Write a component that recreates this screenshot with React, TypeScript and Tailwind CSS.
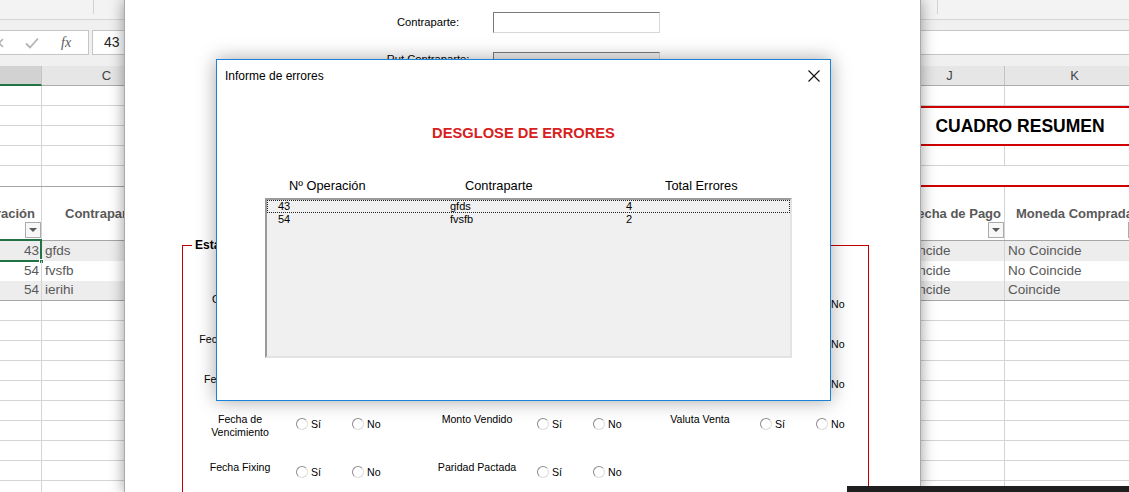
import React from "react";

function Filter() {
  return (
    <div className="flex h-[16px] w-[16px] items-center justify-center border border-[#ababab] bg-[#f7f7f7]">
      <div className="h-0 w-0 border-l-[4px] border-r-[4px] border-t-[4px] border-l-transparent border-r-transparent border-t-[#595959]" />
    </div>
  );
}

function EmptyRow({ h = "h-[20px]" }: { h?: string }) {
  return (
    <div className={`flex shrink-0 border-b border-[#d4d4d4] ${h}`}>
      <div className="w-[122px] border-r border-[#d4d4d4]" />
      <div className="w-[130px] border-r border-[#d4d4d4]" />
      <div className="w-[723px] border-r border-[#d4d4d4]" />
      <div className="w-[110px] border-r border-[#d4d4d4]" />
      <div className="w-[140px] border-r border-[#d4d4d4]" />
    </div>
  );
}

function DataRow({ op, cp, j, k, shaded, selected, last }: { op: string; cp: string; j: string; k: string; shaded?: boolean; selected?: boolean; last?: boolean }) {
  return (
    <div className={`flex h-[20px] shrink-0 text-[13.5px] text-[#595959] ${shaded ? "bg-[#ededed]" : "bg-white"} ${last ? "border-b border-[#a6a6a6]" : ""}`}>
      <div className="relative flex w-[122px] items-center justify-end border-r border-[#d4d4d4] pr-[2px]">
        {op}
        {selected && (
          <>
            <div className="absolute -bottom-[1px] -right-[1px] -top-[2px] left-0 border-2 border-[#217346]" />
            <div className="absolute -bottom-[3px] -right-[3px] h-[5px] w-[5px] border border-white bg-[#217346]" />
          </>
        )}
      </div>
      <div className="flex w-[130px] items-center border-r border-[#d4d4d4] pl-[3px]">{cp}</div>
      <div className="w-[723px] border-r border-[#d4d4d4]" />
      <div className="flex w-[110px] items-center border-r border-[#d4d4d4] pl-[3px]">{j}</div>
      <div className="flex w-[140px] items-center border-r border-[#d4d4d4] pl-[3px]">{k}</div>
    </div>
  );
}

function Excel() {
  return (
    <div className="flex h-full flex-col bg-white">
      {/* ribbon bottom */}
      <div className="flex h-[19px] shrink-0 bg-[#f3f3f3]">
        <div className="w-[93px]" />
        <div className="h-[14px] w-px bg-[#d2d2d2]" />
        <div className="w-[843px]" />
        <div className="h-[14px] w-px bg-[#d2d2d2]" />
      </div>
      <div className="h-[11px] shrink-0 border-t border-[#d5d5d5] bg-[#f0f0f0]" />
      {/* formula bar */}
      <div className="flex h-[25px] shrink-0 bg-[#f0f0f0]">
        <div className="relative flex w-[89px] items-center border border-l-0 border-[#c6c6c6] bg-white">
          <svg width="10" height="10" viewBox="0 0 10 10" className="-ml-[6px]">
            <path d="M1 1L9 9M9 1L1 9" stroke="#b4b4b4" strokeWidth="1.6" />
          </svg>
          <svg width="14" height="12" viewBox="0 0 14 12" className="ml-[21px]">
            <path d="M1 6.5L5 10.5L13 1.5" stroke="#b4b4b4" strokeWidth="1.8" fill="none" />
          </svg>
          <span className="ml-[22px] font-['Liberation_Serif'] text-[14px] italic text-[#595959]">fx</span>
        </div>
        <div className="ml-[3px] flex flex-1 items-center border border-r-0 border-[#c6c6c6] bg-white pl-[11px] text-[14px] text-[#222]">
          43
        </div>
      </div>
      <div className="h-[11px] shrink-0 bg-[#f0f0f0]" />

      <div className="-ml-[80px] flex w-[1225px] flex-col">
        {/* column headers */}
        <div className="flex h-[20px] shrink-0 text-[13px] text-[#444]">
          <div className="w-[122px] border-b-2 border-r border-[#217346] border-r-[#c3c3c3] bg-[#d2d2d2]" />
          <div className="flex w-[130px] items-center justify-center border-b border-r border-[#ababab] border-r-[#c3c3c3] bg-[#e6e6e6]">C</div>
          <div className="w-[723px] border-b border-r border-[#ababab] bg-[#e6e6e6]" />
          <div className="flex w-[110px] items-center justify-center border-b border-r border-[#ababab] border-r-[#c3c3c3] bg-[#e6e6e6]">J</div>
          <div className="flex w-[140px] items-center justify-center border-b border-r border-[#ababab] border-r-[#c3c3c3] bg-[#e6e6e6]">K</div>
        </div>

        <EmptyRow />
        <div className="flex h-[40px] shrink-0">
          <div className="flex w-[975px] flex-col">
            <div className="flex h-[20px] border-b border-[#d4d4d4]">
              <div className="w-[122px] border-r border-[#d4d4d4]" />
              <div className="w-[130px] border-r border-[#d4d4d4]" />
            </div>
            <div className="flex h-[20px] border-b border-[#d4d4d4]">
              <div className="w-[122px] border-r border-[#d4d4d4]" />
              <div className="w-[130px] border-r border-[#d4d4d4]" />
            </div>
          </div>
          <div className="flex w-[250px] items-center justify-center border-b-2 border-t-2 border-[#d00000] text-[17.5px] font-bold text-black">
            CUADRO RESUMEN
          </div>
        </div>
        <EmptyRow />
        <div className="flex h-[21px] shrink-0">
          <div className="flex w-[975px] border-b border-[#a6a6a6]">
            <div className="w-[122px] border-r border-[#d4d4d4]" />
            <div className="w-[130px] border-r border-[#d4d4d4]" />
          </div>
          <div className="w-[250px] border-b-2 border-[#d00000]" />
        </div>

        {/* table header */}
        <div className="flex h-[54px] shrink-0 border-b border-[#a6a6a6] text-[13px] font-bold text-[#595959]">
          <div className="flex w-[122px] flex-col items-end justify-end overflow-hidden border-r border-[#d4d4d4] pb-[2px]">
            <div className="whitespace-nowrap pr-[6px] leading-[16px]">Nº Operación</div>
            <Filter />
          </div>
          <div className="flex w-[130px] flex-col items-start justify-end border-r border-[#d4d4d4] pb-[2px] pl-[23px]">
            <div className="whitespace-nowrap leading-[16px]">Contraparte</div>
            <div className="h-[16px] self-end"><Filter /></div>
          </div>
          <div className="w-[723px] border-r border-[#d4d4d4]" />
          <div className="flex w-[110px] flex-col items-end justify-end border-r border-[#d4d4d4] pb-[2px]">
            <div className="whitespace-nowrap pr-[3px] leading-[16px]">Fecha de Pago</div>
            <Filter />
          </div>
          <div className="flex w-[140px] flex-col items-center justify-end border-r border-[#d4d4d4] pb-[2px]">
            <div className="whitespace-nowrap leading-[16px]">Moneda Comprada</div>
            <div className="self-end"><Filter /></div>
          </div>
        </div>

        <DataRow op="43" cp="gfds" j="Coincide" k="No Coincide" shaded selected />
        <DataRow op="54" cp="fvsfb" j="Coincide" k="No Coincide" />
        <DataRow op="54" cp="ierihi" j="Coincide" k="Coincide" shaded last />
        {Array.from({ length: 10 }).map((_, i) => (
          <EmptyRow key={i} />
        ))}
      </div>
    </div>
  );
}

function Radio({ label, w }: { label: string; w: string }) {
  return (
    <div className={`flex items-center gap-[3px] ${w}`}>
      <span className="h-[12px] w-[12px] shrink-0 rounded-full border border-b-[#dcdcdc] border-l-[#8c8c8c] border-r-[#dcdcdc] border-t-[#8c8c8c] bg-white" />
      <span className="leading-[13px]">{label}</span>
    </div>
  );
}

function FormRow({ h, a, b, c }: { h: string; a: string; b: string; c?: string }) {
  return (
    <div className={`flex items-start ${h}`}>
      <div className="ml-[7px] w-[100px] text-center leading-[13px]">{a}</div>
      <div className="ml-[6px] mt-[4.5px] flex">
        <Radio label="Sí" w="w-[56px]" />
        <Radio label="No" w="w-[75px]" />
      </div>
      <div className="w-[100px] text-center leading-[13px]">{b}</div>
      <div className="ml-[10px] mt-[4.5px] flex">
        <Radio label="Sí" w="w-[56px]" />
        <Radio label="No" w="w-[57px]" />
      </div>
      {c && (
        <>
          <div className="w-[100px] text-center leading-[13px]">{c}</div>
          <div className="ml-[10px] mt-[4.5px] flex">
            <Radio label="Sí" w="w-[56px]" />
            <Radio label="No" w="w-[40px]" />
          </div>
        </>
      )}
    </div>
  );
}

function UserForm() {
  return (
    <div className="absolute left-[124px] top-0 h-[492px] w-[797px] overflow-hidden border-x border-[#a9a9a9] bg-white text-black shadow-[0_0_14px_rgba(0,0,0,0.4)]">
      <div className="flex flex-col pt-[12px] text-[11.2px]">
        <div className="flex h-[21px] items-center">
          <div className="ml-[253px] w-[100px] text-center">Contraparte:</div>
          <div className="ml-[15px] h-[21px] w-[167px] border border-b-[#d8d8d8] border-l-[#7a7a7a] border-r-[#d8d8d8] border-t-[#7a7a7a] bg-white" />
        </div>
        <div className="mt-[19px] flex h-[21px] items-start">
          <div className="ml-[253px] w-[100px] text-center leading-[14px]">Rut Contraparte:</div>
          <div className="ml-[15px] h-[21px] w-[167px] border border-b-[#d8d8d8] border-l-[#7a7a7a] border-r-[#d8d8d8] border-t-[#7a7a7a] bg-[#f0f0f0]" />
        </div>
      </div>
      <fieldset className="ml-[57px] mt-[165px] h-[300px] w-[687px] border border-[#c00000] text-[10.6px]">
        <legend className="ml-[9px] px-[3px] text-[12px] font-bold leading-[14px]">Estado de Coincidencia</legend>
        <div className="flex flex-col pt-[41px]">
          <FormRow h="h-[40px]" a="Contraparte" b="Monto Comprado" c="Moneda Vendida" />
          <FormRow h="h-[40px]" a="Fecha Operación" b="Paridad Spot" c="Valuta Compra" />
          <FormRow h="h-[40px]" a="Fecha de Inicio" b="Puntos Forward" c="Modalidad" />
          <FormRow h="h-[48px]" a="Fecha de Vencimiento" b="Monto Vendido" c="Valuta Venta" />
          <FormRow h="h-[40px]" a="Fecha Fixing" b="Paridad Pactada" />
        </div>
      </fieldset>
    </div>
  );
}

function ErrorDialog() {
  const rows = [
    { op: "43", cp: "gfds", n: "4" },
    { op: "54", cp: "fvsfb", n: "2" },
  ];
  return (
    <div className="absolute left-[216px] top-[59px] flex h-[342px] w-[615px] flex-col border border-[#1a82d9] bg-white text-black shadow-[0_0_18px_rgba(0,0,0,0.35)]">
      <div className="flex h-[31px] shrink-0 items-center justify-between pl-[8px] pr-[10px] text-[12px]">
        <span>Informe de errores</span>
        <svg width="12" height="12" viewBox="0 0 12 12">
          <path d="M0.5 0.5L11.5 11.5M11.5 0.5L0.5 11.5" stroke="#111" strokeWidth="1.1" />
        </svg>
      </div>
      <div className="mt-[32px] text-center text-[14.7px] font-bold leading-[20px] text-[#d8201c]">DESGLOSE DE ERRORES</div>
      <div className="ml-[48px] mt-[35px] flex text-[12.8px] leading-[16px]">
        <div className="w-[200px] pl-[24px]">Nº Operación</div>
        <div className="w-[200px]">Contraparte</div>
        <div>Total Errores</div>
      </div>
      <div className="ml-[48px] mt-[4px] h-[160px] w-[527px] border-2 border-b-[#e3e3e3] border-l-[#9b9b9b] border-r-[#e3e3e3] border-t-[#9b9b9b] bg-[#f0f0f0] text-[11px] leading-[13px]">
        {rows.map((r, i) => (
          <div key={r.op + r.cp} className={`flex h-[13px] border ${i === 0 ? "border-dotted border-[#222]" : "border-transparent"}`}>
            <div className="w-[182px] pl-[10px] leading-[11px]">{r.op}</div>
            <div className="w-[176px] leading-[11px]">{r.cp}</div>
            <div className="leading-[11px]">{r.n}</div>
          </div>
        ))}
      </div>
    </div>
  );
}

export default function App() {
  return (
    <div className="relative h-[492px] w-[1129px] overflow-hidden bg-white font-['Liberation_Sans',sans-serif]">
      <Excel />
      <UserForm />
      <ErrorDialog />
      <div className="absolute left-[847px] top-[486px] h-[6px] w-[282px] bg-[#1f1f1f]" />
    </div>
  );
}
